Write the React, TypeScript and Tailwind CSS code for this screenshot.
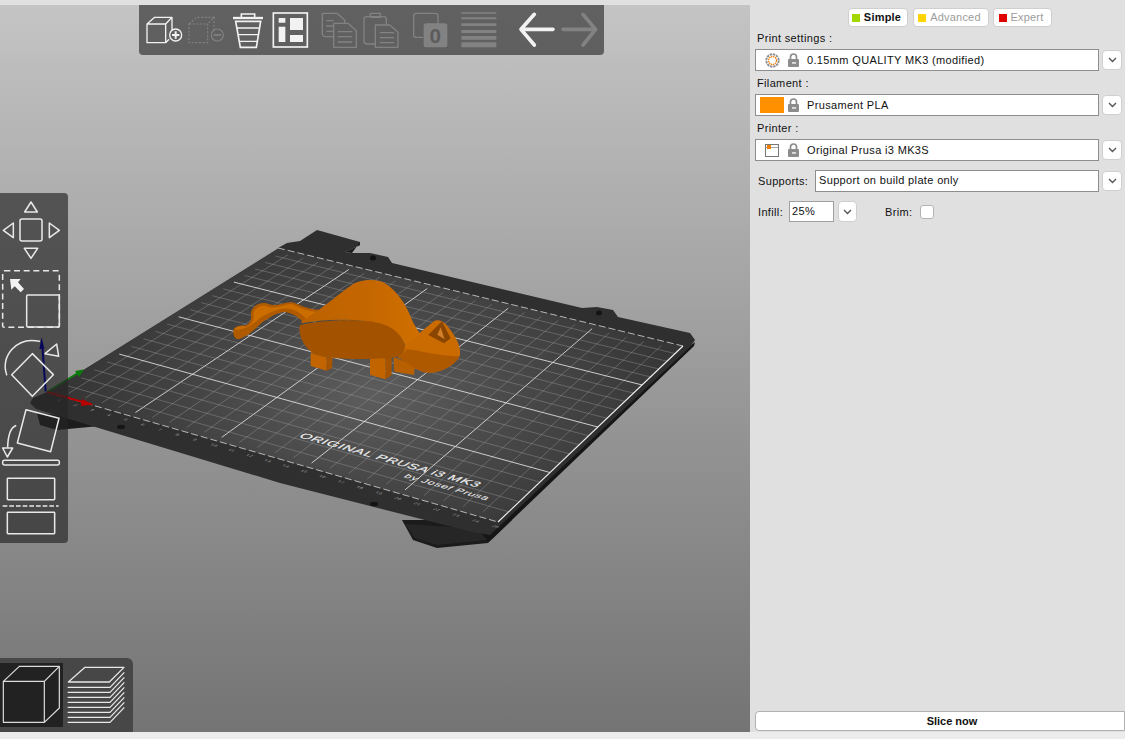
import React from "react";

type Pt = [number, number];

// maps the print area (u along the front edge, v along the left edge) to screen
function makeProjector(A: Pt, B: Pt, C: Pt, D: Pt) {
  const dx1 = B[0] - C[0], dx2 = D[0] - C[0], sx = A[0] - B[0] + C[0] - D[0];
  const dy1 = B[1] - C[1], dy2 = D[1] - C[1], sy = A[1] - B[1] + C[1] - D[1];
  const den = dx1 * dy2 - dx2 * dy1;
  const g = (sx * dy2 - dx2 * sy) / den;
  const h = (dx1 * sy - sx * dy1) / den;
  const a = B[0] - A[0] + g * B[0], b = D[0] - A[0] + h * D[0];
  const d = B[1] - A[1] + g * B[1], e = D[1] - A[1] + h * D[1];
  return (u: number, v: number): Pt => {
    const w = g * u + h * v + 1;
    return [(a * u + b * v + A[0]) / w, (d * u + e * v + A[1]) / w];
  };
}

const A: Pt = [47, 392];
const B: Pt = [498, 522];
const C: Pt = [683, 346];
const D: Pt = [278, 248];
const project = makeProjector(A, B, C, D);

function GridLine({ from, to, major }: { from: Pt; to: Pt; major: boolean }) {
  const p = project(from[0], from[1]);
  const q = project(to[0], to[1]);
  return (
    <line
      x1={p[0]} y1={p[1]} x2={q[0]} y2={q[1]}
      stroke={major ? "#e4e4e4" : "#9a9a9a"}
      strokeOpacity={major ? 0.85 : 0.6}
      strokeWidth={major ? 1 : 0.7}
    />
  );
}

function Bed() {
  const lines = [];
  for (let i = 1; i < 25; i++) {
    lines.push(<GridLine key={"u" + i} from={[i / 25, 0.02]} to={[i / 25, 0.975]} major={i % 5 === 0} />);
  }
  for (let j = 1; j < 20; j++) {
    lines.push(<GridLine key={"v" + j} from={[0.02, j / 20]} to={[1, j / 20]} major={j % 5 === 0} />);
  }
  const labels = [];
  for (let i = 1; i <= 25; i++) {
    const p = project(i / 25, -0.012);
    labels.push(
      <text key={i} transform={`matrix(0.95 0.27 -0.5 0.4 ${p[0] - 4} ${p[1] + 2})`} fontSize="6" fill="#a0a0a0">
        {i}
      </text>
    );
  }
  const ticksA = project(0, 0), ticksB = project(1, 0), ticksC = project(1, 1), ticksD = project(0, 1);
  return (
    <g>
      {/* sheet thickness and lower tabs */}
      <path d="M37 413 L40 425 L57 430 L100 426 L120 420 Z" fill="#1c1c1c" />
      <path d="M402 520 L413 540 L437 548 L488 543 L512 520 Z" fill="#1b1b1b" />
      <path d="M405 524 L415 538 L437 545 L487 540 L497 530 Z" fill="#262626" />
      <path d="M695 342 L694 346 L493 538 L488 541 L470 520 Z" fill="#161616" />
      {/* sheet */}
      <path
        d="M47 392 L278 248 L287 243 L300 241 L317 230 L360 242 L360 245 L345 252 L352 253 L370 253 L388 257 L392 263 L582 308 L597 307 L613 310 L618 317 L690 333 L695 340 L690 347 L490 535 L472 532 L280 483 L36 409 L30 403 L33 398 Z"
        fill="#2f2f2f"
      />
      <path d="M360 242 L360 245 L345 252 L352 253 Z" fill="#1e1e1e" />
      {/* print area */}
      <path d={`M${A} L${B} L${C} L${D} Z`} fill="url(#plate)" />
      {lines}
      {labels}
      <line x1={ticksA[0]} y1={ticksA[1]} x2={ticksB[0]} y2={ticksB[1]} stroke="#c4c4c4" strokeWidth="0.9" strokeDasharray="7 3" />
      <line x1={ticksD[0]} y1={ticksD[1]} x2={ticksC[0]} y2={ticksC[1]} stroke="#c4c4c4" strokeWidth="0.9" strokeDasharray="7 3" />
      <line x1={ticksA[0]} y1={ticksA[1]} x2={ticksD[0]} y2={ticksD[1]} stroke="#a8a8a8" strokeWidth="1" />
      <line x1={ticksB[0]} y1={ticksB[1]} x2={ticksC[0]} y2={ticksC[1]} stroke="#f0f0f0" strokeWidth="1.1" />
      {/* screw holes */}
      <ellipse cx="373" cy="258" rx="3" ry="2.5" fill="#141414" />
      <ellipse cx="599" cy="313" rx="3" ry="2.5" fill="#141414" />
      <ellipse cx="121" cy="427" rx="4" ry="2.2" fill="#161616" />
      <ellipse cx="374" cy="504" rx="4" ry="2.2" fill="#141414" />
      {/* printed label */}
      <text transform="matrix(0.96 0.27 -0.62 0.42 298 437)" fontSize="14.5" letterSpacing="0.75" fill="#f0f0f0" stroke="#f0f0f0" strokeWidth="0.2">
        ORIGINAL PRUSA i3 MK3
      </text>
      <text transform="matrix(0.96 0.27 -0.62 0.42 403 477)" fontSize="11.5" letterSpacing="0.8" fill="#ececec" stroke="#ececec" strokeWidth="0.15">
        by Josef Prusa
      </text>
      {/* axes */}
      <line x1="47" y1="392" x2="82" y2="370.5" stroke="#0b7a0b" strokeWidth="2" />
      <path d="M75 371 L84 369.5 L79 377 Z" fill="#0b7a0b" />
      <line x1="47" y1="392" x2="92" y2="404.5" stroke="#b80000" strokeWidth="2" />
      <path d="M82 399 L93 404.5 L81 406 Z" fill="#b80000" />
    </g>
  );
}

// traced from the reference at 3x, so the paths stay in those units
function Dino() {
  return (
    <g transform="translate(220 260) scale(0.3333)">
      {/* legs */}
      <path d="M272 278 L320 292 L320 332 L272 318 Z" fill="#c26400" />
      <path d="M320 292 L338 292 L336 325 L320 332 Z" fill="#a65400" />
      <path d="M520 290 L585 318 L582 345 L523 335 Z" fill="#b85f00" />
      <path d="M450 290 L497 295 L497 358 L450 345 Z" fill="#c26400" />
      <path d="M497 295 L515 290 L515 345 L497 358 Z" fill="#a65400" />
      {/* tail */}
      <path
        d="M40 212 C42 200 60 195 75 197 C92 190 96 175 92 160 C95 140 115 126 140 130 C165 143 185 128 215 126 C240 133 260 148 300 150 L250 186 C235 172 215 156 190 156 C165 160 145 176 128 186 C105 206 85 230 55 238 C45 238 38 224 40 212 Z"
        fill="#b05a00"
      />
      <path
        d="M42 208 C50 198 65 198 78 200 C98 192 104 176 100 160 C104 145 120 134 138 138 C165 150 185 134 214 132 C232 138 248 152 290 155 L258 176 C240 158 222 144 190 146 C160 150 140 162 120 174 C100 192 70 214 42 208 Z"
        fill="#cc6d00"
      />
      {/* lower body */}
      <path
        d="M240 195 C300 180 420 175 490 188 C525 198 545 225 555 258 C575 275 640 300 620 320 C590 310 560 295 530 290 C470 300 340 300 290 285 C255 270 232 225 240 195 Z"
        fill="#a35300"
      />
      {/* head */}
      <path
        d="M555 255 L640 185 C650 178 665 180 680 195 C700 220 725 255 720 285 C715 305 670 340 625 338 C590 335 565 312 535 292 C550 285 555 270 555 255 Z"
        fill="#c96b00"
      />
      <path
        d="M558 268 C600 270 660 292 718 288 C712 308 670 340 625 338 C590 335 565 312 535 292 C548 286 554 278 558 268 Z"
        fill="#ae5800"
      />
      <path d="M625 225 L666 184 L692 235 L672 250 Z" fill="#8a4600" />
      <path d="M652 224 L662 202 L674 238 Z" fill="#d2802a" />
      {/* dome */}
      <path
        d="M245 183 C290 160 345 110 395 75 C420 58 470 55 495 70 C530 92 555 130 572 170 C582 195 592 210 602 222 L562 252 L555 255 C540 215 510 190 440 183 C370 176 300 178 245 190 Z"
        fill="url(#dome)"
      />
    </g>
  );
}

function Scene() {
  return (
    <svg className="absolute inset-0" width="750" height="727" viewBox="0 5 750 727">
      <defs>
        <radialGradient id="plate" gradientUnits="userSpaceOnUse" cx="375" cy="395" r="300" gradientTransform="translate(375 395) scale(1 0.55) translate(-375 -395)">
          <stop offset="0" stopColor="#5d5d5d" />
          <stop offset="0.55" stopColor="#464646" />
          <stop offset="1" stopColor="#363636" />
        </radialGradient>
        <linearGradient id="dome" x1="0" y1="0" x2="1" y2="0">
          <stop offset="0" stopColor="#bb6100" />
          <stop offset="0.55" stopColor="#c56700" />
          <stop offset="1" stopColor="#cf6f00" />
        </linearGradient>
      </defs>
      <Bed />
      <Dino />
    </svg>
  );
}

function TopToolbar() {
  const on = "#f2f2f2";
  const off = "#828282";
  return (
    <div className="absolute top-0 left-[139px] h-[50px] w-[465px] rounded-b-[4px] bg-[rgba(50,50,50,0.68)]">
      <svg width="465" height="50" viewBox="28 15 1395 150" fill="none">
        {/* add */}
        <g stroke={on} strokeWidth="4" strokeLinejoin="round">
          <path d="M52 72 H108 V128 H52 Z M52 72 L75 52 H127 L108 72 M127 52 V90 M108 128 L118 118" />
          <circle cx="138" cy="105" r="18" />
          <path d="M127 105 H149 M138 94 V116" strokeWidth="6" />
        </g>
        {/* delete */}
        <g stroke={off} strokeWidth="3.4">
          <path d="M178 72 H234 V128 H178 Z M178 72 L201 52 H253 L234 72 M253 52 V92" strokeDasharray="6 5" />
          <circle cx="263" cy="105" r="18" />
          <path d="M252 105 H274" strokeWidth="5" />
        </g>
        {/* delete all */}
        <g stroke={on} strokeWidth="5">
          <path d="M310 54 H400" strokeWidth="7" />
          <path d="M335 52 V42 H375 V52" />
          <path d="M318 64 L332 142 H380 L393 64 Z" />
          <path d="M321 84 H390 M325 104 H387 M328 124 H384" strokeWidth="4" />
        </g>
        {/* arrange */}
        <rect x="431" y="39" width="102" height="102" stroke={on} strokeWidth="5" />
        <path d="M447 54 H467 V68 H447 Z M447 80 H467 V126 H447 Z M481 54 H520 V90 H481 Z M481 105 H520 V126 H481 Z" fill={on} />
        {/* copy */}
        <g stroke={off} strokeWidth="4" strokeLinejoin="round">
          <path d="M612 110 H588 Q578 110 578 100 V40 H622 L645 60 V70" />
          <path d="M612 70 H655 L680 92 V142 H612 Z" />
          <path d="M590 62 H612 M590 78 H610 M590 94 H610 M624 95 H668 M624 110 H668 M624 126 H668" />
        </g>
        {/* paste */}
        <g stroke={off} strokeWidth="4" strokeLinejoin="round">
          <path d="M737 132 H712 Q703 132 703 123 V58 Q703 50 712 50 H762 Q770 50 770 58 V75" />
          <path d="M722 52 V40 H752 V52 Z" />
          <path d="M737 75 H780 L805 97 V142 H737 Z" />
          <path d="M750 98 H793 M750 113 H793 M750 128 H793" />
        </g>
        {/* instance */}
        <path d="M880 112 H860 Q852 112 852 104 V48 Q852 40 860 40 H917 Q925 40 925 48 V70" stroke={off} strokeWidth="4" />
        <rect x="882" y="70" width="71" height="72" rx="8" fill={off} />
        <text x="917" y="129" textAnchor="middle" fontSize="62" fontWeight="700" fill="#5c5c5c">0</text>
        {/* split */}
        <path d="M995 37 H1100 V41 H995 Z M995 52 H1100 V58 H995 Z M995 70 H1100 V78 H995 Z M995 90 H1100 V99 H995 Z M995 108 H1100 V119 H995 Z M995 127 H1100 V142 H995 Z" fill={off} />
        {/* undo / redo */}
        <path d="M1270 88 H1180 M1214 43 L1174 88 L1214 135" stroke={on} strokeWidth="11" strokeLinecap="round" strokeLinejoin="round" />
        <path d="M1300 88 H1392 M1360 43 L1398 88 L1360 135" stroke={off} strokeWidth="11" strokeLinecap="round" strokeLinejoin="round" />
      </svg>
    </div>
  );
}

function LeftToolbar() {
  return (
    <div className="absolute top-[188px] left-0 h-[350px] w-[68px] rounded-r-[4px] bg-[rgba(37,37,37,0.66)]">
      <svg width="68" height="350" viewBox="0 10 204 1050" fill="none" stroke="#e8e8e8" strokeWidth="4.6" strokeLinejoin="round">
        {/* z axis of the scene shows through the panel */}
        <path d="M137 605 L127 470" stroke="#08085c" strokeWidth="6" />
        <path d="M125 443 L133 478 L118 478 Z" fill="#08085c" stroke="none" />
        {/* move */}
        <rect x="60" y="88" width="66" height="66" rx="6" />
        <path d="M93 37 L112 67 H74 Z M10 122 L40 100 V144 Z M148 100 L178 122 L148 144 Z M73 176 H113 L93 206 Z" />
        {/* scale */}
        <rect x="8" y="243" width="170" height="170" rx="5" strokeDasharray="18 11" />
        <rect x="80" y="316" width="98" height="96" rx="3" />
        <path d="M30 268 H62 L54 278 L72 298 L62 308 L44 290 L34 300 Z" fill="#f2f2f2" stroke="none" />
        {/* rotate */}
        <path d="M20 555 C0 500 50 440 118 455" strokeLinecap="round" />
        <path d="M135 492 L170 463 L176 500 Z" />
        <path d="M97 492 L160 555 L97 620 L35 555 Z" />
        {/* place on face */}
        <path d="M78 660 L177 686 L152 786 L52 760 Z" />
        <path d="M47 708 C32 714 24 740 23 772" strokeLinecap="round" />
        <path d="M8 775 H38 L22 802 Z" />
        <rect x="8" y="812" width="170" height="14" rx="5" />
        {/* cut */}
        <rect x="22" y="866" width="142" height="64" rx="2" />
        <path d="M8 949 H176" strokeDasharray="14 6" />
        <rect x="22" y="968" width="142" height="64" rx="2" />
      </svg>
    </div>
  );
}

function ViewSwitch() {
  const layers = [113, 128, 143, 158, 173, 188, 203, 218];
  return (
    <div className="absolute bottom-0 left-0 flex h-[74px] w-[133px] items-center rounded-tr-[6px] bg-[#474747]">
      <div className="h-[64px] w-[63px] bg-[#222222]">
        <svg width="63" height="64" viewBox="0 40 189 192" fill="none" stroke="#dcdcdc" strokeWidth="3.6" strokeLinejoin="round">
          <path d="M10 95 H133 V218 H10 Z M10 95 L58 50 H178 L133 95 M178 50 V175 L133 218" />
        </svg>
      </div>
      <svg width="70" height="64" viewBox="189 40 210 192" fill="none" stroke="#e8e8e8" strokeWidth="3.8" strokeLinejoin="round">
        <path d="M205 97 L255 53 H372 L328 97 Z" />
        {layers.map((y) => (
          <path key={y} d={`M203 ${y} H330 L373 ${y - 45}`} />
        ))}
      </svg>
    </div>
  );
}

function Chevron({ className }: { className: string }) {
  return (
    <button className={`flex items-center justify-center rounded-[4px] border border-[#cfcfcf] bg-white ${className}`}>
      <svg width="9" height="6" viewBox="0 0 9 6" fill="none" stroke="#555555" strokeWidth="1.4">
        <path d="M1 1 L4.5 4.5 L8 1" />
      </svg>
    </button>
  );
}

function LockIcon() {
  return (
    <svg width="13" height="14" viewBox="0 0 13 14" className="shrink-0">
      <path d="M3.5 6 V4 A3 3 0 0 1 9.5 4 V6" fill="none" stroke="#8c8c8c" strokeWidth="1.7" />
      <rect x="1" y="6" width="11" height="8" rx="1" fill="#8c8c8c" />
      <rect x="5" y="9.3" width="4" height="1.3" fill="#ffffff" />
    </svg>
  );
}

function GearIcon() {
  return (
    <svg width="15" height="15" viewBox="0 0 15 15" className="shrink-0">
      <circle cx="7.5" cy="7.5" r="6.2" fill="#ffffff" stroke="#8f8f8f" strokeWidth="1.9" strokeDasharray="2.4 0.8" />
      <circle cx="7.5" cy="7.5" r="4" fill="#ffffff" stroke="#f5851a" strokeWidth="1.3" strokeDasharray="1.5 0.6" />
    </svg>
  );
}

function PrinterIcon() {
  return (
    <svg width="14" height="13" viewBox="0 0 14 13" className="shrink-0">
      <rect x="0.5" y="0.5" width="13" height="12" fill="#ffffff" stroke="#777777" />
      <path d="M1 3.5 H13" stroke="#a8a8a8" />
      <rect x="2" y="1" width="4" height="4" fill="#f07f00" />
    </svg>
  );
}

function PresetRow({ icon, text }: { icon: React.ReactNode; text: string }) {
  return (
    <div className="flex h-[22px] items-center gap-[3px]">
      <div className="flex h-[22px] w-[344px] items-center border border-[#8e8e8e] bg-white">
        <div className="flex w-[31px] shrink-0 items-center justify-center pl-[1px]">{icon}</div>
        <LockIcon />
        <span className="ml-[7px] text-[#111111]">{text}</span>
      </div>
      <Chevron className="h-[20px] w-[20px]" />
    </div>
  );
}

function ModeButton({ label, swatch, active, width }: { label: string; swatch: string; active?: boolean; width: string }) {
  return (
    <button className={`flex h-[19px] items-center justify-center gap-[4px] rounded-[4px] border border-[#cfcfcf] bg-white pr-[3px] tracking-[0.2px] ${width} ${active ? "font-bold text-[#111111]" : "text-[#9c9c9c]"}`}>
      <span className={`h-[8px] w-[8px] ${swatch}`} />
      {label}
    </button>
  );
}

function SidePanel() {
  return (
    <div className="flex h-[732px] w-[375px] flex-col bg-[#e0e0e0] pl-[5px] text-[11px] tracking-[0.35px]">
      <div className="mt-[8px] flex gap-[4px] pl-[93px]">
        <ModeButton label="Simple" swatch="bg-[#a2d800]" active width="mr-[1px] w-[60px]" />
        <ModeButton label="Advanced" swatch="bg-[#ffd400]" width="w-[76px]" />
        <ModeButton label="Expert" swatch="bg-[#e00000]" width="w-[59px]" />
      </div>
      <div className="flex h-[22px] items-center pl-[2px] text-[#111111]">Print settings :</div>
      <PresetRow icon={<GearIcon />} text="0.15mm QUALITY MK3 (modified)" />
      <div className="flex h-[23px] items-center pl-[2px] pt-[1px] text-[#111111]">Filament :</div>
      <PresetRow icon={<div className="mr-[1px] h-[16px] w-[24px] bg-[#ff9000]" />} text="Prusament PLA" />
      <div className="flex h-[23px] items-center pl-[2px] pt-[1px] text-[#111111]">Printer :</div>
      <PresetRow icon={<PrinterIcon />} text="Original Prusa i3 MK3S" />
      <div className="mt-[9px] flex h-[22px] items-center">
        <span className="w-[60px] pl-[3px] text-[#111111]">Supports:</span>
        <div className="flex h-[22px] w-[284px] items-center border border-[#8e8e8e] bg-white pb-[2px] pl-[3px] text-[#111111]">
          Support on build plate only
        </div>
        <Chevron className="ml-[3px] h-[20px] w-[20px]" />
      </div>
      <div className="mt-[9px] flex h-[21px] items-center">
        <span className="w-[34px] pl-[3px] pt-[2px] text-[#111111]">Infill:</span>
        <div className="flex h-[21px] w-[45px] items-center border border-[#a0a0a0] bg-white pb-[1px] pl-[2px] text-[#111111]">25%</div>
        <Chevron className="ml-[4px] h-[21px] w-[19px]" />
        <span className="ml-[28px] w-[35px] pt-[2px] text-[#111111]">Brim:</span>
        <span className="h-[14px] w-[14px] rounded-[3px] border border-[#b4b4b4] bg-white" />
      </div>
      <button className="mt-auto mb-[1px] h-[20px] rounded-l-[4px] border border-[#b0b0b0] bg-white pl-[24px] text-center font-bold tracking-normal text-[#111111]">
        Slice now
      </button>
    </div>
  );
}

export default function App() {
  return (
    <div className="flex h-[739px] w-[1125px] flex-col overflow-hidden bg-[#ececec] [font-family:'Liberation_Sans',sans-serif]">
      <div className="flex h-[732px]">
        <div className="flex w-[750px] flex-col">
          <div className="h-[5px] bg-[#e0e0e0]" />
          <div className="relative h-[727px] bg-gradient-to-b from-[#c4c4c4] to-[#747474]">
            <Scene />
            <TopToolbar />
            <LeftToolbar />
            <ViewSwitch />
          </div>
        </div>
        <SidePanel />
      </div>
    </div>
  );
}
